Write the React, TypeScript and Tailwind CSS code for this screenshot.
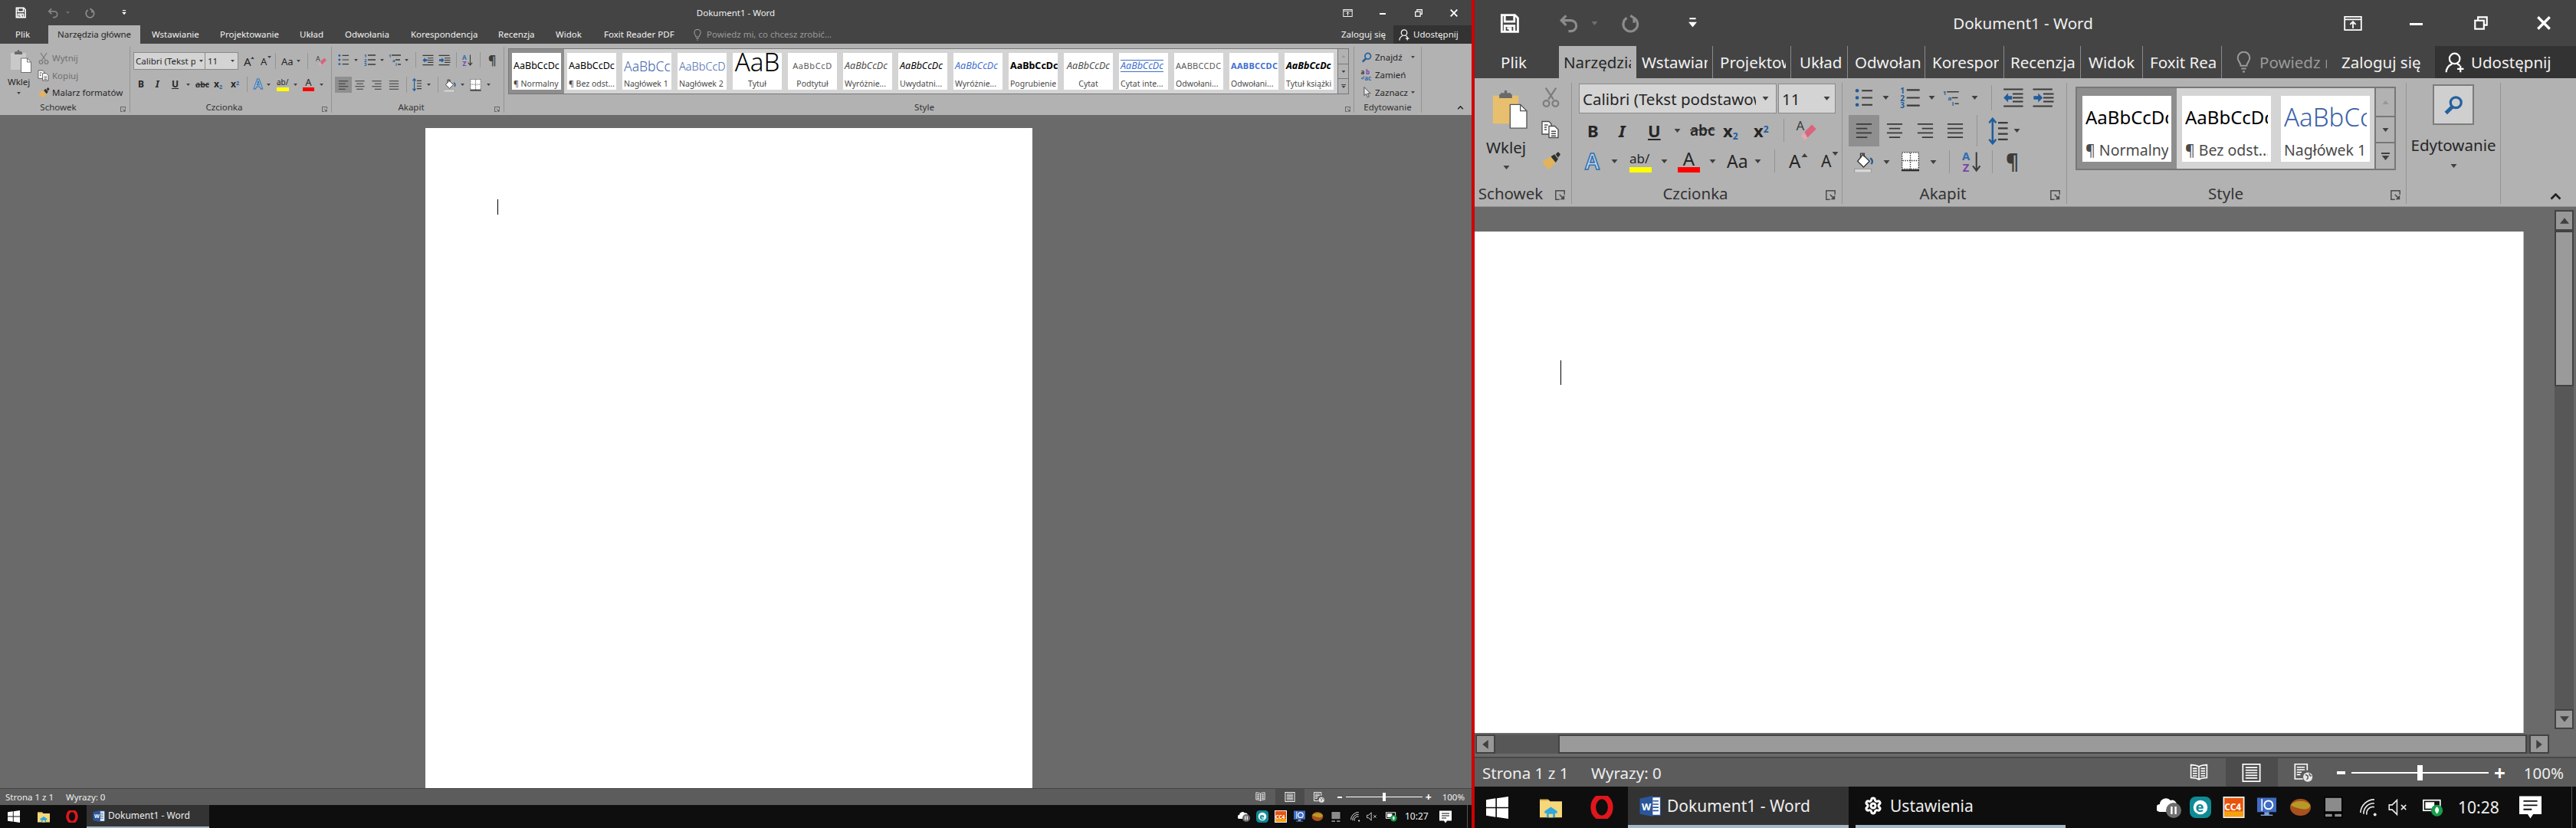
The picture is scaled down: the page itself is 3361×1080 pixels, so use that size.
import type { ReactNode } from "react";
import { Settings } from "lucide-react";

type P = { className?: string };

function Save({ className }: P) {
  return (
    <svg viewBox="0 0 16 16" className={className} fill="none" stroke="#fff" strokeWidth="1.800">
      <path d="M1.500 1h11l2.500 2.500v11.500h-13.500z" />
      <path d="M4 1v5.500h8v-5.500M4 15v-5h8v5" />
      <path d="M6 12h3v3" fill="#fff" />
    </svg>
  );
}
function Undo({ className }: P) {
  return (
    <svg viewBox="0 0 16 16" className={className} fill="none" stroke="#8c8c8c" strokeWidth="2">
      <path d="M6 1.500l-4 4 4 4M2 5.500h8a4.200 4.200 0 0 1 0 9h-2" />
    </svg>
  );
}
function Redo({ className }: P) {
  return (
    <svg viewBox="0 0 16 16" className={className} fill="none" stroke="#8c8c8c" strokeWidth="2">
      <path d="M5.500 3.500a6 6 0 1 0 6 0M8.500 1.500l3 2v4" />
    </svg>
  );
}
function Customize({ className }: P) {
  return (
    <svg viewBox="0 0 8 10" className={className} fill="#fff">
      <path d="M1 0h6v1.500h-6zM0 4h8l-4 5z" />
    </svg>
  );
}
function RibbonDisplay({ className }: P) {
  return (
    <svg viewBox="0 0 16 13" className={className} fill="none" stroke="#fff" strokeWidth="1.200">
      <rect x="0.600" y="0.600" width="14.800" height="11.800" />
      <path d="M0.600 3h14.800M8 11v-6M5.500 7.500l2.500-2.500 2.500 2.500" />
    </svg>
  );
}
function Minimize({ className }: P) {
  return <div className={`bg-white ${className}`} />;
}
function Restore({ className }: P) {
  return (
    <svg viewBox="0 0 14 14" className={className} fill="none" stroke="#fff" strokeWidth="1.700">
      <path d="M4 4v-3h9v8h-3" />
      <rect x="1" y="4.500" width="9" height="8.500" />
    </svg>
  );
}
function Close({ className }: P) {
  return (
    <svg viewBox="0 0 14 14" className={className} fill="none" stroke="#fff" strokeWidth="2.600">
      <path d="M1 1l12 12M13 1l-12 12" />
    </svg>
  );
}
function Bulb({ className }: P) {
  return (
    <svg viewBox="0 0 12 18" className={className} fill="none" stroke="#9a9a9a" strokeWidth="1.300">
      <path d="M3.500 12c0-2.500-2.500-3.500-2.500-6.500a5 5 0 0 1 10 0c0 3-2.500 4-2.500 6.500z" />
      <path d="M4 14.500h4M5 17h2" />
    </svg>
  );
}
function Person({ className }: P) {
  return (
    <svg viewBox="0 0 16 16" className={className} fill="none" stroke="#fff" strokeWidth="1.300">
      <circle cx="7.500" cy="5" r="4" />
      <path d="M1 15.500c0-3.500 2.500-5.500 4.500-6.500M9.500 9c.8.4 1.500.9 2 1.500M12 10.500v5M9.500 13h5" />
    </svg>
  );
}
function Caret({ className }: P) {
  return (
    <svg viewBox="0 0 8 5" className={`shrink-0 ${className}`} fill="#404040">
      <path d="M0 0h8l-4 5z" />
    </svg>
  );
}
function CaretLight({ className }: P) {
  return (
    <svg viewBox="0 0 8 5" className={`shrink-0 ${className}`} fill="#6f6f6f">
      <path d="M0 0h8l-4 5z" />
    </svg>
  );
}
function Launcher({ className }: P) {
  return (
    <svg viewBox="0 0 8 8" className={className} fill="none" stroke="#4a4a4a" strokeWidth="0.900">
      <path d="M7.500 3.500v-3h-7v7h3" />
      <path d="M3.500 3.500l3.500 3.500" />
      <path d="M4 7.500h3.500v-3.500z" fill="#4a4a4a" stroke="none" />
    </svg>
  );
}
function Collapse({ className }: P) {
  return (
    <svg viewBox="0 0 10 6" className={className} fill="none" stroke="#222" strokeWidth="1.800">
      <path d="M1 5l4-4 4 4" />
    </svg>
  );
}
function Paste({ className, board }: P & { board: string }) {
  return (
    <svg viewBox="0 0 28 30" className={className}>
      <path d="M1 4h20v22h-20z" fill={board} />
      <path d="M7 4h8v-2h-3v-2h-2v2h-3z" fill="#6a6a6a" />
      <path d="M6 3h10v3h-10z" fill="#6a6a6a" />
      <path d="M14.500 11h8l5 5v13.500h-13z" fill="#fff" stroke="#555" strokeWidth="0.800" />
      <path d="M22.500 11v5h5" fill="none" stroke="#555" strokeWidth="0.800" />
    </svg>
  );
}
function Scissors({ className }: P) {
  return (
    <svg viewBox="0 0 14 16" className={className} fill="none" stroke="#7c7c7c" strokeWidth="1.300">
      <path d="M3 1l6 9M11 1l-6 9" />
      <circle cx="3.500" cy="13" r="2.300" />
      <circle cx="10.500" cy="13" r="2.300" />
    </svg>
  );
}
function Copy({ className }: P) {
  return (
    <svg viewBox="0 0 16 16" className={className} fill="#fff" stroke="#4c4c4c" strokeWidth="0.900">
      <path d="M1 1h6l2 2v9h-8z" />
      <path d="M7 5h5l3 3v7h-8z" />
      <path d="M3 4h3M3 6h2M3 8h2M9 9.500h4M9 11.500h4M9 13.500h4" fill="none" />
    </svg>
  );
}
function Brush({ className }: P) {
  return (
    <svg viewBox="0 0 16 16" className={className}>
      <path d="M1 8l7-4 4 5-6 6-2-3-1 0z" fill="#e3b35c" />
      <path d="M8 4l3-2 3 4-2 3z" fill="#303030" />
      <path d="M12 2l2-2 2 2-2 3z" fill="#303030" />
    </svg>
  );
}
function Eraser({ className }: P) {
  return (
    <svg viewBox="0 0 14 16" className={className}>
      <path d="M6 9l5-5 3 3-6 6z" fill="#d9647c" />
      <path d="M5 10l3 3-1.500 2-3-3z" fill="#eaa6b2" />
      <text x="0" y="8" fontSize="9" fill="#3c3c3c" fontFamily="Noto Sans, sans-serif">A</text>
    </svg>
  );
}
function Bullets({ className }: P) {
  return (
    <svg viewBox="0 0 15 16" className={className}>
      <g fill="#1f5d9c"><circle cx="2" cy="2" r="1.500" /><circle cx="2" cy="8" r="1.500" /><circle cx="2" cy="14" r="1.500" /></g>
      <path d="M6 2h9M6 8h9M6 14h9" stroke="#3a3a3a" strokeWidth="1.300" />
    </svg>
  );
}
function Numbered({ className }: P) {
  return (
    <svg viewBox="0 0 15 16" className={className}>
      <g fill="#1f5d9c" fontSize="6" fontWeight="700" fontFamily="Noto Sans, sans-serif">
        <text x="0" y="5">1</text><text x="0" y="10.500">2</text><text x="0" y="16">3</text>
      </g>
      <path d="M5 2h10M5 8h10M5 14h10" stroke="#3a3a3a" strokeWidth="1.300" />
    </svg>
  );
}
function Multilevel({ className }: P) {
  return (
    <svg viewBox="0 0 17 16" className={className}>
      <g fill="#1f5d9c" fontSize="6" fontWeight="700" fontFamily="Noto Sans, sans-serif">
        <text x="0" y="5">1</text><text x="5" y="10.500">a</text><text x="9" y="16">i</text>
      </g>
      <path d="M4 2h12M9 8h6M12 14h4" stroke="#3a3a3a" strokeWidth="1.300" />
    </svg>
  );
}
function IndentDec({ className }: P) {
  return (
    <svg viewBox="0 0 16 16" className={className}>
      <path d="M1 1.500h15M8 5h8M8 8h8M8 11h8M1 14.500h15" stroke="#3a3a3a" strokeWidth="1.200" />
      <path d="M1 8l3.500-3.500v2.200h3v2.600h-3v2.200z" fill="#1f5d9c" />
    </svg>
  );
}
function IndentInc({ className }: P) {
  return (
    <svg viewBox="0 0 16 16" className={className}>
      <path d="M0 1.500h15M8 5h8M8 8h8M8 11h8M0 14.500h15" stroke="#3a3a3a" strokeWidth="1.200" />
      <path d="M7.500 8l-3.500-3.500v2.200h-3.500v2.600h3.500v2.200z" fill="#1f5d9c" />
    </svg>
  );
}
function Sort({ className }: P) {
  return (
    <svg viewBox="0 0 16 18" className={className}>
      <text x="0" y="8" fontSize="9.500" fontWeight="700" fill="#2f6db0" fontFamily="Noto Sans, sans-serif">A</text>
      <text x="0.500" y="17.500" fontSize="9.500" fontWeight="700" fill="#7a45a8" fontFamily="Noto Sans, sans-serif">Z</text>
      <path d="M12 1v15M9 12.500l3 4 3-4" fill="none" stroke="#3a3a3a" strokeWidth="1.300" />
    </svg>
  );
}
function Align({ className, kind }: P & { kind: "left" | "center" | "right" | "just" }) {
  const d = {
    left: "M0 2h14M0 6h10M0 10h14M0 14h10",
    center: "M0 2h14M2 6h10M0 10h14M2 14h10",
    right: "M0 2h14M4 6h10M0 10h14M4 14h10",
    just: "M0 2h14M0 6h14M0 10h14M0 14h14",
  }[kind];
  return (
    <svg viewBox="0 0 14 16" className={className}>
      <path d={d} stroke="#3a3a3a" strokeWidth="1.300" />
    </svg>
  );
}
function LineSpacing({ className }: P) {
  return (
    <svg viewBox="0 0 14 20" className={className}>
      <path d="M3 1v18M0.500 4l2.500-3 2.500 3M0.500 16l2.500 3 2.500-3" fill="none" stroke="#1f5d9c" strokeWidth="1.400" />
      <path d="M7 4h7M7 8h7M7 12h7M7 16h7" stroke="#3a3a3a" strokeWidth="1.300" />
    </svg>
  );
}
function Shading({ className }: P) {
  return (
    <svg viewBox="0 0 17 18" className={className}>
      <path d="M7 3l5.500 5.500-5 5-5-5z" fill="#fff" stroke="#3a3a3a" strokeWidth="0.900" />
      <path d="M5 6v-4h3v3" fill="none" stroke="#3a3a3a" strokeWidth="0.900" />
      <path d="M13 6c2 1 2.500 3 1 5" fill="none" stroke="#1f5d9c" strokeWidth="1.500" />
      <rect x="0" y="15" width="14" height="3" fill="#d8d8d8" stroke="#8c8c8c" strokeWidth="0.500" />
    </svg>
  );
}
function Borders({ className }: P) {
  return (
    <svg viewBox="0 0 16 18" className={className}>
      <rect x="0.500" y="0.500" width="15" height="15" fill="#fff" stroke="#3a3a3a" strokeDasharray="1 1" />
      <path d="M8 1v15M1 8h14" stroke="#3a3a3a" strokeDasharray="1 1" />
      <path d="M0 16.800h16" stroke="#222" strokeWidth="1.400" />
    </svg>
  );
}
function Magnifier({ className }: P) {
  return (
    <svg viewBox="0 0 16 16" className={className} fill="none">
      <circle cx="10" cy="6" r="4.300" stroke="#24619f" strokeWidth="2" />
      <path d="M7 9.500l-5 5" stroke="#24619f" strokeWidth="3" />
    </svg>
  );
}
function Replace({ className }: P) {
  return (
    <svg viewBox="0 0 16 16" className={className} fontFamily="Noto Sans, sans-serif" fontWeight="700">
      <text x="0" y="7" fontSize="8.500" fill="#3a3a3a">a</text>
      <text x="7" y="7" fontSize="8.500" fill="#7a45a8">b</text>
      <text x="5" y="15.500" fontSize="8.500" fill="#2f6db0">ac</text>
      <path d="M4 10v3h-3M1 13l1.500-1.500M1 13l1.500 1.500" fill="none" stroke="#1f5d9c" strokeWidth="0.900" />
    </svg>
  );
}
function Cursor({ className }: P) {
  return (
    <svg viewBox="0 0 11 16" className={className}>
      <path d="M1 0.500v12l3-2.500 2 5 2-1-2-4.500h4z" fill="#e8e8e8" stroke="#333" strokeWidth="0.900" />
    </svg>
  );
}
function ReadView({ className }: P) {
  return (
    <svg viewBox="0 0 14 15" className={className} fill="none" stroke="#fff" strokeWidth="1">
      <path d="M7 2.500c-1.500-1-3.500-1.500-6.500-1.500v10.500c3 0 5 .5 6.500 1.500 1.500-1 3.500-1.500 6.500-1.500v-10.500c-3 0-5 .5-6.500 1.500zM7 2.500v11" />
      <path d="M2 4h3.500M2 6h3.500M2 8h3.500M2 10h3.500M8.500 4h3.500M8.500 6h3.500M8.500 8h3.500M8.500 10h3.500" />
    </svg>
  );
}
function PrintView({ className }: P) {
  return (
    <svg viewBox="0 0 14 14" className={className} fill="none" stroke="#fff" strokeWidth="1">
      <rect x="0.500" y="0.500" width="13" height="13" />
      <path d="M2.500 3h9M2.500 5h9M2.500 7h9M2.500 9h9M2.500 11h9" />
    </svg>
  );
}
function WebView({ className }: P) {
  return (
    <svg viewBox="0 0 15 15" className={className} fill="none" stroke="#fff" strokeWidth="1">
      <path d="M7 12.500h-6.500v-12h10v5M2 3h6.500M2 5h6.500M2 7h4M2 9h3" />
      <circle cx="11" cy="11" r="3.800" fill="#e8e8e8" stroke="none" />
      <path d="M9 9l2 1 0 2-1 1M12 8l1 2 1 0" stroke="#555" strokeWidth="0.900" />
    </svg>
  );
}
function Windows({ className }: P) {
  return (
    <svg viewBox="0 0 16 16" className={className} fill="#fff">
      <path d="M0 2.300l6.800-1v6.300h-6.800zM7.700 1.200l8.300-1.200v7.600h-8.300zM0 8.400h6.800v6.300l-6.800-1zM7.700 8.400h8.300v7.600l-8.300-1.200z" />
    </svg>
  );
}
function Folder({ className }: P) {
  return (
    <svg viewBox="0 0 16 14" className={className}>
      <path d="M0 1h6l1.500 1.500h8.500v11.500h-16z" fill="#f6d77a" />
      <path d="M0 1h6l1 1h-7z" fill="#e2b64a" />
      <path d="M3.500 9.500l4.500-3 4.500 3v1.500h-1.500v3h-6v-3h-1.500z" fill="#2ea8e0" />
      <path d="M6.500 11.500h3v2.500h-3z" fill="#f6d77a" />
    </svg>
  );
}
function Opera({ className }: P) {
  return (
    <svg viewBox="0 0 16 16" className={className}>
      <ellipse cx="8" cy="8" rx="6" ry="7.500" fill="none" stroke="#e0161d" strokeWidth="3.600" />
    </svg>
  );
}
function WordIcon({ className }: P) {
  return (
    <svg viewBox="0 0 16 16" className={className}>
      <path d="M8 1h8v14h-8z" fill="#fff" stroke="#2b579a" strokeWidth="0.800" />
      <path d="M10 4h4.500M10 6.500h4.500M10 9h4.500M10 11.500h4.500" stroke="#2b579a" strokeWidth="1" />
      <path d="M0 2l10-2v16l-10-2z" fill="#2b579a" />
      <text x="1.500" y="11" fontSize="7.500" fontWeight="700" fill="#fff" fontFamily="Noto Sans, sans-serif">W</text>
    </svg>
  );
}
function CloudPause({ className }: P) {
  return (
    <svg viewBox="0 0 16 14" className={className}>
      <path d="M2 10a2.500 2.500 0 0 1 0-5 4 4 0 0 1 7-2.500 3 3 0 0 1 4 2.500v5z" fill="#fff" />
      <circle cx="11" cy="9" r="5" fill="#6e6e6e" />
      <path d="M9.700 6.500v5M12.300 6.500v5" stroke="#fff" strokeWidth="1.200" />
    </svg>
  );
}
function Eset({ className }: P) {
  return (
    <svg viewBox="0 0 16 16" className={className}>
      <rect x="0" y="0" width="16" height="16" rx="4.500" fill="#0f8b96" />
      <circle cx="8" cy="8" r="5.300" fill="#fff" />
      <text x="4.300" y="11.500" fontSize="10.500" fontWeight="700" fill="#0f8b96" fontFamily="Noto Sans, sans-serif">e</text>
    </svg>
  );
}
function Cc4({ className }: P) {
  return (
    <svg viewBox="0 0 16 16" className={className}>
      <rect x="0" y="0" width="16" height="16" fill="#f4f4f4" />
      <rect x="1" y="1" width="14" height="14" fill="#e8540c" />
      <rect x="1" y="11" width="14" height="4" fill="#f6a20e" />
      <text x="1" y="10.500" fontSize="6.800" fontWeight="700" fill="#fff" fontFamily="Noto Sans, sans-serif">CC4</text>
    </svg>
  );
}
function ScreenIcon({ className }: P) {
  return (
    <svg viewBox="0 0 16 16" className={className}>
      <rect x="0" y="0" width="16" height="12" fill="#3f6cc4" />
      <path d="M6 12h4v2h3v1h-10v-1h3z" fill="#7f9fdc" />
      <circle cx="9.500" cy="6" r="3.500" fill="none" stroke="#fff" strokeWidth="1.300" />
      <path d="M4 1v10" stroke="#fff" strokeWidth="1" />
    </svg>
  );
}
function Ball({ className }: P) {
  return (
    <svg viewBox="0 0 16 13" className={className}>
      <ellipse cx="8" cy="6.500" rx="8" ry="6.500" fill="#a8501f" />
      <path d="M0.500 5a8 5 0 0 1 15 0c0 1.500-2 3-4 3-3 0-7-1-11-3z" fill="#b79a25" />
    </svg>
  );
}
function GrayBox({ className }: P) {
  return (
    <svg viewBox="0 0 14 16" className={className}>
      <rect x="0" y="0" width="14" height="16" fill="#000" />
      <rect x="1" y="1" width="12" height="10" fill="#8b8b8b" />
      <rect x="1" y="13" width="5" height="2" fill="#8b8b8b" />
      <rect x="8" y="13" width="5" height="2" fill="#8b8b8b" />
    </svg>
  );
}
function Wifi({ className }: P) {
  return (
    <svg viewBox="0 0 14 14" className={className} fill="none" stroke="#e8e8e8" strokeWidth="1">
      <path d="M0.500 11a11 11 0 0 1 11-10.500M3 12a8 8 0 0 1 8.500-8.500M5.500 12.500a5 5 0 0 1 6-6" />
      <circle cx="12" cy="12.500" r="1.200" fill="#e8e8e8" stroke="none" />
    </svg>
  );
}
function Speaker({ className }: P) {
  return (
    <svg viewBox="0 0 16 14" className={className} fill="none" stroke="#e8e8e8" strokeWidth="1">
      <path d="M0.500 5h2.500l4-4v12l-4-4h-2.500z" />
      <path d="M10.500 5l4 4M14.500 5l-4 4" />
    </svg>
  );
}
function Battery({ className }: P) {
  return (
    <svg viewBox="0 0 16 14" className={className}>
      <rect x="0.500" y="1.500" width="13" height="8" fill="none" stroke="#fff" />
      <rect x="2" y="3" width="7" height="5" fill="#fff" />
      <circle cx="11" cy="9.500" r="4.500" fill="#16a04a" />
      <path d="M11 6.500c2 1.500 2 3.500 0 5.500-2-2-2-4 0-5.500z" fill="#fff" />
    </svg>
  );
}
function Notification({ className }: P) {
  return (
    <svg viewBox="0 0 16 16" className={className}>
      <path d="M0 0h16v13h-6l-2 3-2-3h-6z" fill="#fff" />
      <path d="M3 3.500h10M3 6.500h10M3 9.500h6" stroke="#0e0e0e" strokeWidth="1" />
    </svg>
  );
}

function Group({ className, label, labelClass, launcher, children }: { className: string; label: string; labelClass: string; launcher?: ReactNode; children: ReactNode }) {
  return (
    <div className={`relative flex flex-col shrink-0 border-r border-[#949494] ${className}`}>
      <div className="flex-1 min-h-0">{children}</div>
      <div className={`text-center text-[#333] ${labelClass}`}>{label}</div>
      {launcher}
    </div>
  );
}

function Sep({ className }: P) {
  return <div className={`w-px shrink-0 self-stretch bg-[#949494] ${className}`} />;
}

const stylesLeft = [
  { cls: "text-[12.5px] text-black", sample: "AaBbCcDc", label: "¶ Normalny" },
  { cls: "text-[12.5px] text-black", sample: "AaBbCcDc", label: "¶ Bez odst..." },
  { cls: "text-[17.5px] font-light text-[#3b62a8]", sample: "AaBbCc", label: "Nagłówek 1" },
  { cls: "text-[14.5px] font-light text-[#3b62a8]", sample: "AaBbCcD", label: "Nagłówek 2" },
  { cls: "text-[33px] leading-[24px] font-light mb-[10px] text-black", sample: "AaB", label: "Tytuł", center: true },
  { cls: "text-[11px] tracking-[0.6px] text-[#5a5a5a]", sample: "AaBbCcD", label: "Podtytuł", center: true },
  { cls: "text-[12.5px] italic text-[#4d4d4d]", sample: "AaBbCcDc", label: "Wyróżnie..." },
  { cls: "text-[12.5px] italic text-black", sample: "AaBbCcDc", label: "Uwydatni..." },
  { cls: "text-[12.5px] italic text-[#3f6fd0]", sample: "AaBbCcDc", label: "Wyróżnie..." },
  { cls: "text-[12.5px] font-bold text-black", sample: "AaBbCcDc", label: "Pogrubienie" },
  { cls: "text-[12.5px] italic text-[#4d4d4d]", sample: "AaBbCcDc", label: "Cytat", center: true },
  { cls: "text-[12.5px] italic text-[#3f6fd0] border-y border-[#3f6fd0]", sample: "AaBbCcDc", label: "Cytat inte..." },
  { cls: "text-[11px] tracking-[0.3px] uppercase text-[#5a5a5a]", sample: "AaBbCcDc", label: "Odwołani..." },
  { cls: "text-[11px] font-bold tracking-[0.3px] uppercase text-[#3f6fd0]", sample: "AaBbCcDc", label: "Odwołani..." },
  { cls: "text-[12.5px] font-bold italic text-black", sample: "AaBbCcDc", label: "Tytuł książki" },
];

function LeftWindow() {
  return (
    <div className="flex flex-col w-[1920px] h-[1080px] shrink-0 text-[11.5px] leading-[14px]">
      <div className="grid grid-cols-[1fr_auto_1fr] items-center h-[33px] bg-[#444444] text-white">
        <div className="flex items-center">
          <Save className="w-[14px] h-[15px] ml-[20px]" />
          <Undo className="w-[14px] h-[14px] ml-[28px] opacity-90" />
          <CaretLight className="w-[5px] h-[3px] ml-[10px]" />
          <Redo className="w-[14px] h-[14px] ml-[19px]" />
          <Customize className="w-[6px] h-[7px] ml-[35px]" />
        </div>
        <div className="text-[#f0f0f0]">Dokument1 - Word</div>
        <div className="flex items-center justify-end">
          <RibbonDisplay className="w-[13px] h-[10px]" />
          <Minimize className="w-[8px] h-[2px] ml-[35px] mt-[2px]" />
          <Restore className="w-[10px] h-[10px] ml-[38px]" />
          <Close className="w-[10px] h-[10px] ml-[36px] mr-[18px]" />
        </div>
      </div>
      <div className="flex items-stretch h-[24px] bg-[#444444] text-[#f2f2f2] whitespace-nowrap">
        <div className="w-[63px] pl-[20px] flex items-center">Plik</div>
        <div className="w-[120px] bg-[#b2b2b2] text-[#262626] flex items-center justify-center">Narzędzia główne</div>
        <div className="w-[89px] pl-[15px] flex items-center">Wstawianie</div>
        <div className="w-[104px] pl-[15px] flex items-center">Projektowanie</div>
        <div className="w-[59px] pl-[15px] flex items-center">Układ</div>
        <div className="w-[86px] pl-[15px] flex items-center">Odwołania</div>
        <div className="w-[114px] pl-[15px] flex items-center">Korespondencja</div>
        <div className="w-[75px] pl-[15px] flex items-center">Recenzja</div>
        <div className="w-[63px] pl-[15px] flex items-center">Widok</div>
        <div className="w-[117px] pl-[15px] flex items-center">Foxit Reader PDF</div>
        <div className="flex items-center ml-[15px]">
          <Bulb className="w-[10px] h-[15px]" />
          <span className="ml-[7px] text-[#9a9a9a]">Powiedz mi, co chcesz zrobić...</span>
        </div>
        <div className="ml-auto flex items-center pr-[10px]">Zaloguj się</div>
        <div className="w-[102px] bg-[#333333] flex items-center">
          <Person className="w-[15px] h-[15px] ml-[7px]" />
          <span className="ml-[4px]">Udostępnij</span>
        </div>
      </div>
      <div className="relative flex items-start h-[93px] pt-[4px] bg-[#b2b2b2] text-[#262626] whitespace-nowrap">
        <Group
          className="w-[170px] h-[86px]"
          label="Schowek"
          labelClass="h-[14px] pr-[17px]"
          launcher={<Launcher className="absolute right-[5px] bottom-[1px] w-[7px] h-[7px]" />}
        >
          <div className="flex">
            <div className="w-[49px] flex flex-col shrink-0">
              <Paste board="#c9c9c9" className="w-[28px] h-[30px] ml-[13px] mt-[4px]" />
              <span className="ml-[10px] mt-[5px]">Wklej</span>
              <Caret className="w-[5px] h-[3px] ml-[22px] mt-[6px]" />
            </div>
            <div className="flex flex-col mt-[3px]">
              <div className="flex items-center h-[23px] text-[#707070]">
                <Scissors className="w-[14px] h-[16px] ml-[1px]" />
                <span className="ml-[4px]">Wytnij</span>
              </div>
              <div className="flex items-center h-[23px] text-[#707070]">
                <Copy className="w-[15px] h-[15px]" />
                <span className="ml-[4px]">Kopiuj</span>
              </div>
              <div className="flex items-center h-[22px]">
                <Brush className="w-[16px] h-[15px]" />
                <span className="ml-[3px]">Malarz formatów</span>
              </div>
            </div>
          </div>
        </Group>
        <Group
          className="w-[263px] h-[86px]"
          label="Czcionka"
          labelClass="h-[14px] pr-[17px]"
          launcher={<Launcher className="absolute right-[5px] bottom-[1px] w-[7px] h-[7px]" />}
        >
          <div className="flex items-center h-[23px] mt-[7px] ml-[4px]">
            <div className="flex items-center w-[94px] h-full bg-[#d4d4d4] border border-[#8a8a8a] pl-[2px]">
              <span className="w-[78px] overflow-hidden">Calibri (Tekst podstawowy)</span>
              <Caret className="w-[5px] h-[3px] ml-[5px]" />
            </div>
            <div className="flex items-center w-[43px] h-full bg-[#d4d4d4] border-y border-r border-[#8a8a8a] pl-[3px]">
              <span className="w-[30px]">11</span>
              <Caret className="w-[5px] h-[3px]" />
            </div>
            <div className="relative ml-[7px] w-[11px] text-[15px]">A<Caret className="absolute rotate-180 right-[-3px] top-[1px] w-[5px] h-[3px]" /></div>
            <div className="relative ml-[11px] w-[12px] text-[13px]">A<Caret className="absolute right-[-2px] top-[0px] w-[5px] h-[3px]" /></div>
            <Sep className="ml-[7px] my-[1px]" />
            <span className="ml-[7px] w-[16px] text-[13px]">Aa</span>
            <Caret className="w-[5px] h-[3px] ml-[4px]" />
            <Sep className="ml-[9px] my-[1px]" />
            <Eraser className="w-[14px] h-[17px] ml-[10px]" />
          </div>
          <div className="flex items-center h-[20px] mt-[9px] text-[12px]">
            <span className="ml-[10px] w-[8px] font-bold">B</span>
            <span className="ml-[15px] w-[7px] italic font-bold">I</span>
            <span className="ml-[14px] w-[9px] underline font-bold">U</span>
            <Caret className="w-[5px] h-[3px] ml-[10px]" />
            <span className="ml-[7px] w-[16px] text-[10.5px] font-semibold line-through">abc</span>
            <span className="ml-[8px] w-[13px] font-bold">x<sub className="text-[7px] text-[#1f5d9c]">2</sub></span>
            <span className="ml-[9px] w-[11px] font-bold">x<sup className="text-[7px] text-[#1f5d9c]">2</sup></span>
            <Sep className="ml-[10px]" />
            <span className="ml-[8px] w-[14px] text-[17px] font-semibold text-[#c6d8ea] [-webkit-text-stroke:1px_#2d6fb0]">A</span>
            <Caret className="w-[5px] h-[3px] ml-[3px]" />
            <div className="ml-[8px] w-[16px] flex flex-col items-stretch">
              <span className="text-[10px] leading-[13px]">ab/</span>
              <div className="h-[5px] bg-[#ffff00]" />
            </div>
            <Caret className="w-[5px] h-[3px] ml-[6px]" />
            <div className="ml-[7px] w-[15px] flex flex-col items-center">
              <span className="text-[13px] leading-[13px]">A</span>
              <div className="w-full h-[5px] bg-[#ff0000]" />
            </div>
            <Caret className="w-[5px] h-[3px] ml-[7px]" />
          </div>
        </Group>
        <Group
          className="w-[225px] h-[86px]"
          label="Akapit"
          labelClass="h-[14px] pr-[17px]"
          launcher={<Launcher className="absolute right-[5px] bottom-[1px] w-[7px] h-[7px]" />}
        >
          <div className="flex items-center h-[20px] mt-[7px]">
            <Bullets className="w-[14px] h-[16px] ml-[8px]" />
            <Caret className="w-[5px] h-[3px] ml-[7px]" />
            <Numbered className="w-[15px] h-[16px] ml-[8px]" />
            <Caret className="w-[5px] h-[3px] ml-[6px]" />
            <Multilevel className="w-[17px] h-[16px] ml-[6px]" />
            <Caret className="w-[5px] h-[3px] ml-[4px]" />
            <Sep className="ml-[9px]" />
            <IndentDec className="w-[16px] h-[15px] ml-[7px]" />
            <IndentInc className="w-[16px] h-[15px] ml-[6px]" />
            <Sep className="ml-[7px]" />
            <Sort className="w-[14px] h-[17px] ml-[7px]" />
            <Sep className="ml-[9px]" />
            <span className="ml-[10px] text-[16px] font-bold text-[#3c3c3c]">¶</span>
          </div>
          <div className="flex items-center h-[21px] mt-[12px]">
            <div className="ml-[4px] w-[22px] h-[21px] bg-[#8f8f8f] flex items-center justify-center">
              <Align kind="left" className="w-[14px] h-[14px]" />
            </div>
            <Align kind="center" className="w-[13px] h-[14px] ml-[4px]" />
            <Align kind="right" className="w-[13px] h-[14px] ml-[9px]" />
            <Align kind="just" className="w-[14px] h-[14px] ml-[9px]" />
            <Sep className="ml-[9px]" />
            <LineSpacing className="w-[12px] h-[19px] ml-[7px]" />
            <Caret className="w-[5px] h-[3px] ml-[7px]" />
            <Sep className="ml-[9px]" />
            <Shading className="w-[17px] h-[18px] ml-[7px]" />
            <Caret className="w-[5px] h-[3px] ml-[5px]" />
            <Borders className="w-[15px] h-[16px] ml-[7px]" />
            <Caret className="w-[5px] h-[3px] ml-[7px]" />
          </div>
        </Group>
        <Group
          className="w-[1109px] h-[86px]"
          label="Style"
          labelClass="h-[14px] pr-[12px]"
          launcher={<Launcher className="absolute right-[4px] bottom-[1px] w-[7px] h-[7px]" />}
        >
          <div className="flex ml-[5px] mt-[2px] h-[60px] w-[1097px]">
            <div className="flex w-[1083px] h-full bg-[#d4d4d4] border border-[#777777]">
              {stylesLeft.map((s, i) => (
                <div key={i} className={`w-[72px] shrink-0 flex items-center justify-center ${i === 0 ? "bg-[#8e8e8e]" : ""}`}>
                  <div className="w-[64px] h-[48px] bg-white flex flex-col overflow-hidden text-[#4a4a4a]">
                    <div className={`h-[33px] shrink-0 flex items-center overflow-hidden ${s.center ? "justify-center" : "pl-[2px]"}`}>
                      <span className={s.cls}>{s.sample}</span>
                    </div>
                    <div className={`h-[15px] shrink-0 text-[10.5px] leading-[15px] overflow-hidden ${s.center ? "text-center" : "pl-[2px]"}`}>{s.label}</div>
                  </div>
                </div>
              ))}
            </div>
            <div className="flex flex-col w-[14px] h-full border-y border-r border-[#777777]">
              <div className="h-[20px] flex items-center justify-center border-b border-[#777777]"><CaretLight className="w-[6px] h-[3px] rotate-180 opacity-40" /></div>
              <div className="h-[19px] flex items-center justify-center border-b border-[#777777]"><Caret className="w-[6px] h-[3px]" /></div>
              <div className="flex-1 flex flex-col items-center justify-center gap-[1px]"><div className="w-[6px] h-px bg-[#404040]" /><Caret className="w-[6px] h-[3px]" /></div>
            </div>
          </div>
        </Group>
        <Group className="w-[88px] h-[86px]" label="Edytowanie" labelClass="h-[14px]">
          <div className="flex flex-col mt-[2px]">
            <div className="flex items-center h-[23px]">
              <Magnifier className="w-[14px] h-[14px] ml-[9px]" />
              <span className="ml-[4px] w-[47px]">Znajdź</span>
              <Caret className="w-[5px] h-[3px]" />
            </div>
            <div className="flex items-center h-[23px]">
              <Replace className="w-[16px] h-[15px] ml-[8px]" />
              <span className="ml-[3px]">Zamień</span>
            </div>
            <div className="flex items-center h-[23px]">
              <Cursor className="w-[10px] h-[15px] ml-[12px]" />
              <span className="ml-[5px] w-[47px]">Zaznacz</span>
              <Caret className="w-[5px] h-[3px]" />
            </div>
          </div>
        </Group>
        <Collapse className="absolute left-[1901px] top-[81px] w-[9px] h-[5px]" />
      </div>
      <div className="flex-1 min-h-0 flex bg-[#6a6a6a] pt-[17px]">
        <div className="ml-[555px] w-[792px] h-full bg-white pt-[93px] pl-[94px]">
          <div className="w-px h-[20px] bg-black" />
        </div>
      </div>
      <div className="flex items-center h-[22px] bg-[#5c5c5c] border-t border-[#444444] text-[#eeeeee]">
        <span className="ml-[7px] w-[79px]">Strona 1 z 1</span>
        <span>Wyrazy: 0</span>
        <div className="ml-auto flex items-center h-full">
          <ReadView className="w-[13px] h-[13px]" />
          <div className="ml-[13px] w-[38px] h-full bg-[#4c4c4c] flex items-center justify-center"><PrintView className="w-[14px] h-[13px]" /></div>
          <WebView className="w-[14px] h-[14px] ml-[12px]" />
          <div className="w-[6px] h-[2px] bg-white ml-[17px]" />
          <div className="relative flex items-center justify-center w-[100px] h-[1px] bg-white ml-[5px]">
            <div className="w-[4px] h-[11px] bg-white" />
          </div>
          <span className="ml-[4px] text-[14px] font-bold text-white">+</span>
          <span className="ml-[14px] mr-[9px]">100%</span>
        </div>
      </div>
      <div className="flex items-center h-[30px] bg-[#0e0e0e] text-[#eeeeee]">
        <Windows className="w-[16px] h-[16px] ml-[10px]" />
        <Folder className="w-[16px] h-[15px] ml-[23px]" />
        <Opera className="w-[16px] h-[16px] ml-[21px]" />
        <div className="ml-[11px] w-[160px] h-full bg-[#333333] border-b-2 border-[#a3b7c4] flex items-center">
          <WordIcon className="w-[16px] h-[15px] ml-[8px]" />
          <span className="ml-[4px] text-[12px]">Dokument1 - Word</span>
        </div>
        <div className="ml-auto flex items-center mr-[5px] h-full">
          <CloudPause className="w-[16px] h-[14px]" />
          <Eset className="w-[16px] h-[16px] ml-[8px]" />
          <Cc4 className="w-[16px] h-[16px] ml-[8px]" />
          <ScreenIcon className="w-[15px] h-[16px] ml-[9px]" />
          <Ball className="w-[16px] h-[12px] ml-[8px]" />
          <GrayBox className="w-[14px] h-[15px] ml-[9px]" />
          <Wifi className="w-[13px] h-[13px] ml-[12px]" />
          <Speaker className="w-[14px] h-[12px] ml-[8px]" />
          <Battery className="w-[15px] h-[14px] ml-[11px]" />
          <span className="ml-[10px] w-[27px] text-[12px]">10:27</span>
          <Notification className="w-[16px] h-[17px] ml-[18px]" />
          <div className="w-px h-[30px] bg-[#555] ml-[20px]" />
        </div>
      </div>
    </div>
  );
}

function RightTab({ className, inner, children }: { className: string; inner: string; children: ReactNode }) {
  return (
    <div className={`shrink-0 h-full flex items-center overflow-hidden ${className}`}>
      <div className={`overflow-hidden whitespace-nowrap ${inner}`}>{children}</div>
    </div>
  );
}

function SquareButton({ className, children }: { className: string; children: ReactNode }) {
  return <div className={`bg-[#989898] border-2 border-[#424242] flex items-center justify-center ${className}`}>{children}</div>;
}

function RightWindow() {
  return (
    <div className="flex flex-col flex-1 min-w-0 h-[1080px] text-[20.5px] leading-[24px]">
      <div className="grid grid-cols-[1fr_auto_1fr] items-center h-[60px] bg-[#444444] text-white">
        <div className="flex items-center">
          <Save className="w-[25px] h-[25px] ml-[33px]" />
          <Undo className="w-[27px] h-[25px] ml-[51px]" />
          <CaretLight className="w-[9px] h-[5px] ml-[16px]" />
          <Redo className="w-[25px] h-[25px] ml-[29px]" />
          <Customize className="w-[11px] h-[14px] ml-[64px]" />
        </div>
        <div className="text-[#f0f0f0] mr-[6px]">Dokument1 - Word</div>
        <div className="flex items-center justify-end">
          <RibbonDisplay className="w-[24px] h-[19px]" />
          <Minimize className="w-[17px] h-[3px] ml-[62px] mt-[3px]" />
          <Restore className="w-[18px] h-[18px] ml-[67px]" />
          <Close className="w-[18px] h-[18px] ml-[64px] mr-[33px]" />
        </div>
      </div>
      <div className="flex items-stretch h-[42px] bg-[#444444] text-[#f2f2f2]">
        <RightTab className="w-[110px] pl-[34px]" inner="">Plik</RightTab>
        <RightTab className="w-[101px] pl-[6px] bg-[#b2b2b2] text-[#262626]" inner="w-[88px]">Narzędzia główne</RightTab>
        <RightTab className="w-[100px] pl-[7px] border-r border-[#8a8a8a]" inner="w-[86px]">Wstawianie</RightTab>
        <RightTab className="w-[102px] pl-[9px] border-r border-[#8a8a8a]" inner="w-[86px]">Projektowanie</RightTab>
        <RightTab className="w-[74px] pl-[11px] border-r border-[#8a8a8a]" inner="w-[56px]">Układ</RightTab>
        <RightTab className="w-[101px] pl-[9px] border-r border-[#8a8a8a]" inner="w-[86px]">Odwołania</RightTab>
        <RightTab className="w-[103px] pl-[9px] border-r border-[#8a8a8a]" inner="w-[87px]">Korespondencja</RightTab>
        <RightTab className="w-[100px] pl-[8px] border-r border-[#8a8a8a]" inner="w-[86px]">Recenzja</RightTab>
        <RightTab className="w-[81px] pl-[10px] border-r border-[#8a8a8a]" inner="w-[65px]">Widok</RightTab>
        <RightTab className="w-[103px] pl-[9px] border-r border-[#8a8a8a]" inner="w-[86px]">Foxit Reader PDF</RightTab>
        <div className="flex items-center ml-[19px]">
          <Bulb className="w-[19px] h-[28px]" />
          <div className="ml-[11px] w-[88px] overflow-hidden whitespace-nowrap text-[#9a9a9a]">Powiedz mi, co chcesz zrobić...</div>
          <div className="ml-[19px] whitespace-nowrap">Zaloguj się</div>
        </div>
        <div className="ml-auto w-[184px] bg-[#333333] flex items-center">
          <Person className="w-[27px] h-[27px] ml-[13px]" />
          <span className="ml-[7px]">Udostępnij</span>
        </div>
      </div>
      <div className="relative flex items-start h-[168px] pt-[6px] bg-[#b2b2b2] text-[#262626] whitespace-nowrap border-b border-[#8f8f8f]">
        <Group
          className="w-[127px] h-[158px]"
          label="Schowek"
          labelClass="h-[26px] pr-[32px]"
          launcher={<Launcher className="absolute right-[8px] bottom-[5px] w-[13px] h-[13px]" />}
        >
          <div className="flex">
            <div className="w-[85px] flex flex-col shrink-0">
              <Paste board="#e8bf6e" className="w-[51px] h-[50px] ml-[20px] mt-[10px]" />
              <span className="ml-[15px] mt-[12px]">Wklej</span>
              <Caret className="w-[9px] h-[5px] ml-[37px] mt-[12px]" />
            </div>
            <div className="flex flex-col">
              <Scissors className="w-[25px] h-[27px] ml-[2px] mt-[5px]" />
              <Copy className="w-[27px] h-[24px] mt-[17px]" />
              <Brush className="w-[29px] h-[25px] mt-[17px]" />
            </div>
          </div>
        </Group>
        <Group
          className="w-[353px] h-[158px]"
          label="Czcionka"
          labelClass="h-[26px] pr-[30px]"
          launcher={<Launcher className="absolute right-[8px] bottom-[5px] w-[13px] h-[13px]" />}
        >
          <div className="flex items-center h-[39px] mt-[1px] ml-[9px]">
            <div className="flex items-center w-[258px] h-full bg-[#d4d4d4] border border-[#8a8a8a] pl-[4px]">
              <span className="w-[226px] overflow-hidden">Calibri (Tekst podstawowy)</span>
              <Caret className="w-[9px] h-[5px] ml-[8px]" />
            </div>
            <div className="flex items-center w-[75px] h-full ml-[2px] bg-[#d4d4d4] border border-[#8a8a8a] pl-[4px]">
              <span className="w-[54px]">11</span>
              <Caret className="w-[9px] h-[5px]" />
            </div>
          </div>
          <div className="flex items-center h-[30px] mt-[7px] text-[22px]">
            <span className="ml-[20px] w-[14px] font-bold">B</span>
            <span className="ml-[27px] w-[12px] italic font-bold">I</span>
            <span className="ml-[26px] w-[16px] underline font-bold">U</span>
            <Caret className="w-[9px] h-[5px] ml-[18px]" />
            <span className="ml-[12px] w-[30px] text-[19px] font-semibold line-through">abc</span>
            <span className="ml-[13px] w-[22px] font-bold">x<sub className="text-[12px] text-[#1f5d9c]">2</sub></span>
            <span className="ml-[18px] w-[22px] font-bold">x<sup className="text-[12px] text-[#1f5d9c]">2</sup></span>
            <Sep className="ml-[17px]" />
            <Eraser className="w-[27px] h-[30px] ml-[15px]" />
          </div>
          <div className="flex items-center h-[30px] mt-[10px]">
            <span className="ml-[17px] w-[22px] text-[28px] font-semibold text-[#c6d8ea] [-webkit-text-stroke:1.500px_#2d6fb0]">A</span>
            <Caret className="w-[9px] h-[5px] ml-[12px]" />
            <div className="ml-[15px] w-[29px] flex flex-col">
              <span className="text-[17px] leading-[23px]">ab/</span>
              <div className="h-[7px] bg-[#ffff00]" />
            </div>
            <Caret className="w-[9px] h-[5px] ml-[12px]" />
            <div className="ml-[13px] w-[29px] flex flex-col items-center">
              <span className="text-[24px] leading-[23px]">A</span>
              <div className="w-full h-[7px] bg-[#ff0000]" />
            </div>
            <Caret className="w-[9px] h-[5px] ml-[12px]" />
            <span className="ml-[14px] w-[27px] text-[23px]">Aa</span>
            <Caret className="w-[9px] h-[5px] ml-[9px]" />
            <Sep className="ml-[17px]" />
            <div className="relative ml-[18px] w-[17px] text-[24px]">A<Caret className="absolute rotate-180 right-[-8px] top-[2px] w-[9px] h-[5px]" /></div>
            <div className="relative ml-[25px] w-[17px] text-[21px]">A<Caret className="absolute right-[-6px] top-[0px] w-[9px] h-[5px]" /></div>
          </div>
        </Group>
        <Group
          className="w-[293px] h-[158px]"
          label="Akapit"
          labelClass="h-[26px] pr-[30px]"
          launcher={<Launcher className="absolute right-[8px] bottom-[5px] w-[13px] h-[13px]" />}
        >
          <div className="flex items-center h-[33px] mt-[3px]">
            <Bullets className="w-[23px] h-[27px] ml-[16px]" />
            <Caret className="w-[9px] h-[5px] ml-[13px]" />
            <Numbered className="w-[26px] h-[27px] ml-[14px]" />
            <Caret className="w-[9px] h-[5px] ml-[11px]" />
            <Multilevel className="w-[22px] h-[27px] ml-[10px]" />
            <Caret className="w-[9px] h-[5px] ml-[15px]" />
            <Sep className="ml-[17px]" />
            <IndentDec className="w-[30px] h-[27px] ml-[12px]" />
            <IndentInc className="w-[30px] h-[27px] ml-[10px]" />
          </div>
          <div className="flex items-center h-[41px] mt-[6px]">
            <div className="ml-[8px] w-[40px] h-[41px] bg-[#8f8f8f] flex items-center justify-center">
              <Align kind="left" className="w-[26px] h-[23px]" />
            </div>
            <Align kind="center" className="w-[26px] h-[23px] ml-[7px]" />
            <Align kind="right" className="w-[26px] h-[23px] ml-[14px]" />
            <Align kind="just" className="w-[26px] h-[23px] ml-[13px]" />
            <Sep className="ml-[15px]" />
            <LineSpacing className="w-[26px] h-[36px] ml-[14px]" />
            <Caret className="w-[9px] h-[5px] ml-[7px]" />
          </div>
          <div className="flex items-center h-[30px] mt-[5px]">
            <Shading className="w-[28px] h-[28px] ml-[15px]" />
            <Caret className="w-[9px] h-[5px] ml-[10px]" />
            <Borders className="w-[25px] h-[26px] ml-[14px]" />
            <Caret className="w-[9px] h-[5px] ml-[13px]" />
            <Sep className="ml-[16px]" />
            <Sort className="w-[25px] h-[28px] ml-[16px]" />
            <Sep className="ml-[14px]" />
            <span className="ml-[17px] text-[26px] leading-[28px] font-bold text-[#3c3c3c]">¶</span>
          </div>
        </Group>
        <Group
          className="w-[443px] h-[158px]"
          label="Style"
          labelClass="h-[26px] pr-[28px]"
          launcher={<Launcher className="absolute right-[7px] bottom-[5px] w-[13px] h-[13px]" />}
        >
          <div className="flex ml-[11px] mt-[5px] h-[109px]">
            <div className="flex w-[392px] h-full bg-[#d4d4d4] border-2 border-[#777777]">
              <div className="w-[130px] shrink-0 flex items-center justify-center bg-[#8e8e8e]">
                <div className="w-[116px] h-[86px] bg-white flex flex-col overflow-hidden text-[#4a4a4a] px-[4px]">
                  <div className="h-[56px] shrink-0 flex items-center overflow-hidden text-[24px] text-black">AaBbCcDc</div>
                  <div className="h-[30px] shrink-0 text-[19.5px] leading-[30px] overflow-hidden">¶ Normalny</div>
                </div>
              </div>
              <div className="w-[130px] shrink-0 flex items-center justify-center">
                <div className="w-[116px] h-[86px] bg-white flex flex-col overflow-hidden text-[#4a4a4a] px-[4px]">
                  <div className="h-[56px] shrink-0 flex items-center overflow-hidden text-[24px] text-black">AaBbCcDc</div>
                  <div className="h-[30px] shrink-0 text-[19.5px] leading-[30px] overflow-hidden">¶ Bez odst...</div>
                </div>
              </div>
              <div className="w-[128px] shrink-0 flex items-center justify-center">
                <div className="w-[116px] h-[86px] bg-white flex flex-col overflow-hidden text-[#4a4a4a] px-[4px]">
                  <div className="h-[56px] shrink-0 flex items-center overflow-hidden text-[33px] font-light text-[#3b62a8]">AaBbCc</div>
                  <div className="h-[30px] shrink-0 text-[19.5px] leading-[30px] overflow-hidden">Nagłówek 1</div>
                </div>
              </div>
            </div>
            <div className="flex flex-col w-[26px] h-full border-y-2 border-r-2 border-[#777777]">
              <div className="h-[38px] flex items-center justify-center border-b-2 border-[#777777]"><CaretLight className="w-[9px] h-[5px] rotate-180 opacity-40" /></div>
              <div className="h-[34px] flex items-center justify-center border-b-2 border-[#777777]"><Caret className="w-[9px] h-[5px]" /></div>
              <div className="flex-1 flex flex-col items-center justify-center gap-[2px]"><div className="w-[11px] h-[2px] bg-[#404040]" /><Caret className="w-[11px] h-[6px]" /></div>
            </div>
          </div>
        </Group>
        <Group className="w-[123px] h-[158px]" label="" labelClass="h-[26px]">
          <div className="flex flex-col items-center">
            <div className="w-[54px] h-[53px] mt-[2px] bg-[#cfcfcf] border-2 border-[#7c7c7c] flex items-center justify-center">
              <Magnifier className="w-[26px] h-[26px]" />
            </div>
            <span className="mt-[14px]">Edytowanie</span>
            <Caret className="w-[9px] h-[5px] mt-[13px]" />
          </div>
        </Group>
        <Collapse className="absolute left-[1403px] top-[150px] w-[15px] h-[9px]" />
      </div>
      <div className="flex-1 min-h-0 flex bg-[#6a6a6a]">
        <div className="w-[1409px] flex flex-col shrink-0">
          <div className="flex-1 min-h-0 pt-[32px]">
            <div className="w-[1369px] h-full bg-white pt-[168px] pl-[112px] border-r border-[#bdbdbd]">
              <div className="w-px h-[32px] bg-black" />
            </div>
          </div>
          <div className="flex h-[31px] pt-[2px] pb-[4px] bg-[#6a6a6a]">
            <SquareButton className="w-[26px] ml-[1px] shrink-0">
              <Caret className="w-[12px] h-[8px] rotate-90" />
            </SquareButton>
            <div className="w-[82px] bg-[#575757] shrink-0" />
            <div className="w-[1264px] bg-[#9a9a9a] border-2 border-[#424242] shrink-0" />
            <div className="w-[3px] bg-[#575757] shrink-0" />
            <SquareButton className="w-[26px] shrink-0">
              <Caret className="w-[12px] h-[8px] -rotate-90" />
            </SquareButton>
          </div>
        </div>
        <div className="w-[25px] flex flex-col pt-[4px] pb-[36px]">
          <SquareButton className="h-[27px] shrink-0">
            <Caret className="w-[12px] h-[8px] rotate-180" />
          </SquareButton>
          <div className="h-[203px] shrink-0 bg-[#9a9a9a] border-2 border-[#424242]" />
          <div className="flex-1 bg-[#575757]" />
          <SquareButton className="h-[26px] shrink-0">
            <Caret className="w-[12px] h-[8px]" />
          </SquareButton>
        </div>
      </div>
      <div className="flex items-center h-[39px] bg-[#5c5c5c] border-t-2 border-[#484848] text-[#eeeeee]">
        <span className="ml-[10px] w-[142px]">Strona 1 z 1</span>
        <span>Wyrazy: 0</span>
        <div className="ml-auto flex items-center h-full">
          <ReadView className="w-[24px] h-[24px]" />
          <div className="ml-[23px] w-[68px] h-full bg-[#4c4c4c] flex items-center justify-center"><PrintView className="w-[25px] h-[24px]" /></div>
          <WebView className="w-[25px] h-[24px] ml-[21px]" />
          <div className="w-[11px] h-[4px] bg-white ml-[31px]" />
          <div className="flex items-center justify-center w-[179px] h-[2px] bg-white ml-[8px]">
            <div className="w-[7px] h-[20px] bg-white" />
          </div>
          <span className="ml-[7px] text-[26px] font-bold text-white">+</span>
          <span className="ml-[24px] mr-[16px]">100%</span>
        </div>
      </div>
      <div className="flex items-stretch h-[54px] bg-[#0e0e0e] text-[#eeeeee]">
        <div className="flex items-center">
          <Windows className="w-[29px] h-[29px] ml-[15px]" />
          <Folder className="w-[29px] h-[27px] ml-[41px]" />
          <Opera className="w-[30px] h-[30px] ml-[37px]" />
        </div>
        <div className="ml-[19px] w-[288px] bg-[#333333] border-b-4 border-[#a3b7c4] flex items-center">
          <WordIcon className="w-[28px] h-[27px] ml-[15px]" />
          <span className="ml-[8px] text-[21px]">Dokument1 - Word</span>
        </div>
        <div className="ml-[9px] w-[274px] border-b-4 border-[#a3b7c4] flex items-center">
          <Settings className="w-[24px] h-[24px] ml-[11px] text-white" strokeWidth={3} />
          <span className="ml-[10px] text-[21px]">Ustawienia</span>
        </div>
        <div className="ml-auto flex items-center mr-[5px]">
          <CloudPause className="w-[32px] h-[28px]" />
          <Eset className="w-[28px] h-[28px] ml-[11px]" />
          <Cc4 className="w-[29px] h-[28px] ml-[15px]" />
          <ScreenIcon className="w-[25px] h-[28px] ml-[16px]" />
          <Ball className="w-[29px] h-[22px] ml-[17px]" />
          <GrayBox className="w-[25px] h-[28px] ml-[16px]" />
          <Wifi className="w-[23px] h-[23px] ml-[22px]" />
          <Speaker className="w-[26px] h-[22px] ml-[14px]" />
          <Battery className="w-[27px] h-[26px] ml-[19px]" />
          <span className="ml-[19px] w-[48px] text-[21px]">10:28</span>
          <Notification className="w-[29px] h-[30px] ml-[32px]" />
          <div className="w-px h-[54px] bg-[#555] ml-[39px]" />
        </div>
      </div>
    </div>
  );
}

export default function App() {
  return (
    <div className="flex w-[3361px] h-[1080px] overflow-hidden bg-[#6a6a6a] font-['Noto_Sans',sans-serif]">
      <LeftWindow />
      <div className="w-[4px] shrink-0 bg-[#d00000]" />
      <RightWindow />
    </div>
  );
}
